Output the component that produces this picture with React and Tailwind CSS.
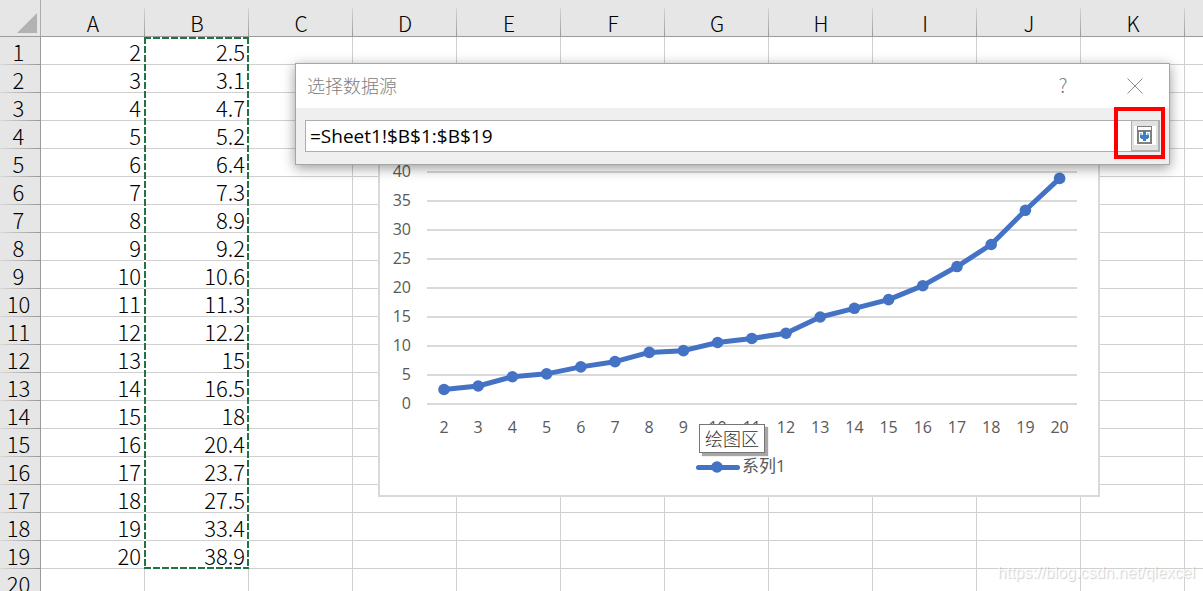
const COLUMNS = ['A', 'B', 'C', 'D', 'E', 'F', 'G', 'H', 'I', 'J', 'K', 'L'];

const DATA = [
    [2, 2.5],
    [3, 3.1],
    [4, 4.7],
    [5, 5.2],
    [6, 6.4],
    [7, 7.3],
    [8, 8.9],
    [9, 9.2],
    [10, 10.6],
    [11, 11.3],
    [12, 12.2],
    [13, 15],
    [14, 16.5],
    [15, 18],
    [16, 20.4],
    [17, 23.7],
    [18, 27.5],
    [19, 33.4],
    [20, 38.9],
];

const TICKS = [0, 5, 10, 15, 20, 25, 30, 35, 40];

function Sheet() {
    const rows = Array.from({ length: 20 }, (_, i) => DATA[i] ?? []);

    return (
        <table className="w-max table-fixed border-separate border-spacing-0 text-[22px] font-light leading-[25px] text-black">
            <thead>
                <tr className="h-[37px] bg-[#e6e6e6]">
                    <th className="w-[41px] min-w-[41px] border-b border-[#9b9b9b] p-0">
                        <button type="button" aria-label="Select all" className="flex h-9 w-full items-end justify-end border-r border-[#ababab] pr-[3px] pb-[3px]">
                            <svg className="size-5" viewBox="0 0 20 20" fill="#b2b2b2">
                                <path d="M20 0V20H0Z" />
                            </svg>
                        </button>
                    </th>
                    {COLUMNS.map((name) => (
                        <th key={name} className="w-[104px] min-w-[104px] border-b border-[#9b9b9b] p-0 font-light">
                            <div className="flex h-9 items-end">
                                <span className="grow pl-px text-[21px]">{name}</span>
                                <span className="h-7 w-px bg-linear-to-b from-[#d4d4d4] to-[#9b9b9b]" />
                            </div>
                        </th>
                    ))}
                </tr>
            </thead>
            <tbody>
                {rows.map((row, i) => (
                    <tr key={i} className="h-7">
                        <th className="border-r border-[#9b9b9b] bg-[#e6e6e6] p-0 font-light">
                            <div className="h-[27px] pt-0.5 pr-[3px]">{i + 1}</div>
                            <div className="h-px bg-linear-to-r from-[#d8d8d8] to-[#9b9b9b]" />
                        </th>
                        {COLUMNS.map((name, c) => (
                            <td key={name} className="border-r border-b border-[#d0d0d0] p-0 pt-0.5 pr-[3px] text-right">
                                {row[c]}
                            </td>
                        ))}
                    </tr>
                ))}
            </tbody>
        </table>
    );
}

// Dashed border around the copied range B1:B19
function RangeMarker() {
    return (
        <svg className="absolute top-9 left-36 h-[534px] w-[106px]" viewBox="0 0 106 534" fill="none" strokeWidth="2">
            <rect x="1" y="2" width="103" height="530" stroke="#fff" />
            <path d="M0 2H105M1 1V533M104 1V533M0 532H105" stroke="#217346" strokeDasharray="7 2" />
        </svg>
    );
}

function Chart() {
    const x = (i) => 66 + i * 34.2;
    const y = (value) => 340 - value * 5.8;
    const points = DATA.map(([, value], i) => `${x(i)},${y(value)}`).join(' ');

    return (
        <div className="absolute top-16 left-[378px] h-[433px] w-[722px] border-2 border-[#d9d9d9] bg-white">
            <svg
                className="absolute -inset-0.5 h-[433px] w-[722px] font-['Open_Sans','Noto_Sans_CJK_SC',sans-serif] text-[16px]"
                viewBox="0 0 722 433"
                fill="#595959"
            >
                {TICKS.map((tick) => (
                    <g key={tick}>
                        <path d={`M49 ${y(tick)}H699`} stroke="#d9d9d9" strokeWidth="2" />
                        <text x="33" y={y(tick) + 5} textAnchor="end">
                            {tick}
                        </text>
                    </g>
                ))}
                <polyline points={points} fill="none" stroke="#4472c4" strokeWidth="5" strokeLinejoin="round" />
                {DATA.map(([label, value], i) => (
                    <g key={label}>
                        <circle cx={x(i)} cy={y(value)} r="5.8" fill="#4472c4" />
                        <text x={x(i)} y="369" textAnchor="middle">
                            {label}
                        </text>
                    </g>
                ))}
                <path d="M320.500 403.500H359.500" stroke="#4472c4" strokeWidth="5" strokeLinecap="round" />
                <circle cx="339" cy="403" r="5.800" fill="#4472c4" />
                <text x="364" y="408" className="text-[17px]">
                    系列1
                </text>
            </svg>
        </div>
    );
}

function RestoreIcon() {
    return (
        <svg className="h-[19px] w-[22px]" viewBox="0 0 22 19" shapeRendering="crispEdges">
            <path d="M0 0H22V19H0Z" fill="#fff" />
            <path d="M3 0H18V18H3ZM4 1V4H17V1ZM5 6V16H16V6Z" fill="#7f7f7f" fillRule="evenodd" />
            <path d="M6 7H8V9H6ZM13 7H15V9H13Z" fill="#9dc3e6" />
            <path d="M9 5H12V9H15V12H14V13H12V15H9V13H7V12H6V9H9Z" fill="#3b7fc4" />
        </svg>
    );
}

function DataSourceDialog() {
    return (
        <section
            role="dialog"
            aria-label="选择数据源"
            className="absolute top-[63px] left-[295px] w-[875px] border border-[#a5a5a5] bg-[#efefef] shadow-[0_3px_12px_rgba(0,0,0,0.4)]"
        >
            <header className="flex h-11 items-center bg-white pl-[11px] text-[18px] leading-6 font-light text-[#808080]">
                <h1 className="grow pb-0.5">选择数据源</h1>
                <button type="button" className="w-10 pb-0.5 text-[20px]">
                    ?
                </button>
                <button type="button" aria-label="Close" className="mr-3 ml-[30px] flex h-8 w-11 items-center justify-center">
                    <svg className="size-4" viewBox="0 0 16 16" fill="none" stroke="#8c8c8c">
                        <path d="M0.500 0.500L15.500 15.500M15.500 0.500L0.500 15.500" />
                    </svg>
                </button>
            </header>
            <div className="flex px-[9px] pt-3 pb-3">
                <input
                    aria-label="选择数据源"
                    defaultValue="=Sheet1!$B$1:$B$19"
                    className="h-8 min-w-0 grow border border-r-0 border-[#abadb3] bg-white px-1 font-['Open_Sans',sans-serif] text-[19px] text-black outline-none"
                />
                <button
                    type="button"
                    aria-label="Expand dialog"
                    className="flex h-8 w-[29px] items-center justify-center border border-r-2 border-b-2 border-[#adadad] bg-[#e1e1e1]"
                >
                    <RestoreIcon />
                </button>
            </div>
            <div className="pointer-events-none absolute top-[43px] right-1 h-[52px] w-[51px] border-4 border-[#ff0000]" />
        </section>
    );
}

export default function App() {
    return (
        <main className="relative h-screen w-full overflow-hidden bg-white font-['Noto_Sans_CJK_SC',sans-serif]">
            <Sheet />
            <RangeMarker />
            <Chart />
            <div
                role="tooltip"
                className="absolute top-[424px] left-[699px] border border-[#767676] bg-white px-[5px] text-[18px] leading-[27px] font-light text-[#303030] shadow-[3px_3px_1px_rgba(0,0,0,0.35)]"
            >
                绘图区
            </div>
            <DataSourceDialog />
            <a
                href="https://blog.csdn.net/qlexcel"
                className="absolute right-2 bottom-2 font-['Liberation_Sans',sans-serif] text-[16px] leading-5 text-white/80 [text-shadow:1px_1px_1px_rgba(0,0,0,0.2)]"
            >
                https://blog.csdn.net/qlexcel
            </a>
        </main>
    );
}
